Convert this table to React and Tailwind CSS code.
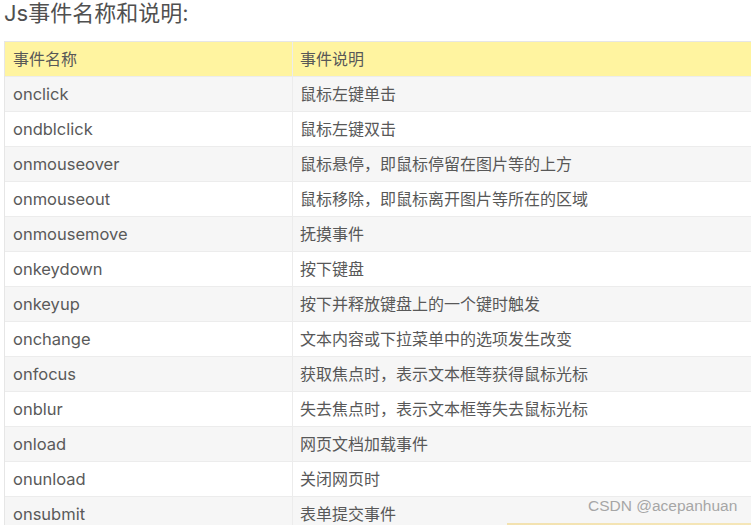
import React from "react";

const rows = [
  ["onclick", "鼠标左键单击"],
  ["ondblclick", "鼠标左键双击"],
  ["onmouseover", "鼠标悬停，即鼠标停留在图片等的上方"],
  ["onmouseout", "鼠标移除，即鼠标离开图片等所在的区域"],
  ["onmousemove", "抚摸事件"],
  ["onkeydown", "按下键盘"],
  ["onkeyup", "按下并释放键盘上的一个键时触发"],
  ["onchange", "文本内容或下拉菜单中的选项发生改变"],
  ["onfocus", "获取焦点时，表示文本框等获得鼠标光标"],
  ["onblur", "失去焦点时，表示文本框等失去鼠标光标"],
  ["onload", "网页文档加载事件"],
  ["onunload", "关闭网页时"],
  ["onsubmit", "表单提交事件"],
];

export default function App() {
  return (
    <div
      className="relative w-[751px] h-[525px] overflow-hidden bg-white text-[#585858]"
      style={{ fontFamily: 'Inter, "Noto Sans CJK SC", sans-serif' }}
    >
      <div className="pl-[4px] h-[41px] text-[22px] leading-[26px] text-[#505050]">
        Js事件名称和说明:
      </div>
      <div className="ml-[4px] w-[760px] border-t border-l border-[#e6e6e6]">
        <div className="flex h-[35px] bg-[#fff4a0] border-b border-[#ececec]">
          <div className="w-[288px] border-r border-[#ececec] pl-[8px] flex items-center text-[16px]">
            事件名称
          </div>
          <div className="flex-1 pl-[7px] flex items-center text-[16px]">事件说明</div>
        </div>
        {rows.map(([a, b], i) => (
          <div
            key={a}
            className={
              "flex h-[35px] border-b border-[#ececec] " +
              (i % 2 === 0 ? "bg-[#f6f6f6]" : "bg-white")
            }
          >
            <div className="w-[288px] border-r border-[#ececec] pl-[8px] flex items-center text-[16.5px] text-[#5a5a5a]">
              {a}
            </div>
            <div className="flex-1 pl-[7px] flex items-center text-[16px]">{b}</div>
          </div>
        ))}
      </div>
      <div
        className="absolute left-[588px] top-[496px] text-[15.5px] leading-[20px] text-[#a6a6a6]"
        style={{ fontFamily: '"Liberation Sans", sans-serif' }}
      >
        CSDN @acepanhuan
      </div>
      <div className="absolute left-[507px] top-[523px] w-[244px] h-[2px] bg-gradient-to-r from-[#f3e2b0] to-[#f5e6b8]" />
    </div>
  );
}
